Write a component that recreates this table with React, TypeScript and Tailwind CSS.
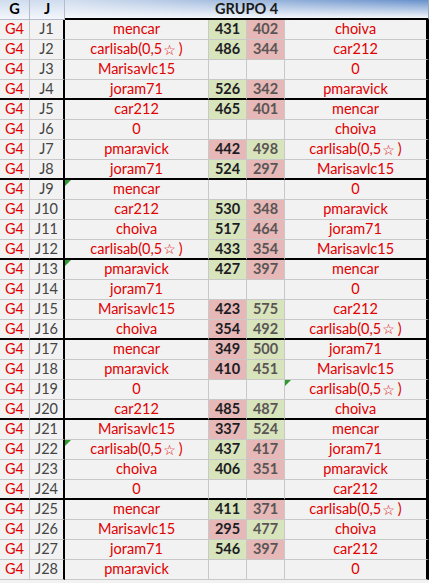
import React from 'react';

type Partido = {
  j: string;
  local: string;
  pl?: number;
  pv?: number;
  visitante: string;
  marca?: 'local' | 'visitante';
};

const partidos: Partido[] = [
  { j: 'J1', local: 'mencar', pl: 431, pv: 402, visitante: 'choiva' },
  { j: 'J2', local: 'carlisab(0,5☆)', pl: 486, pv: 344, visitante: 'car212' },
  { j: 'J3', local: 'Marisavlc15', visitante: '0' },
  { j: 'J4', local: 'joram71', pl: 526, pv: 342, visitante: 'pmaravick' },
  { j: 'J5', local: 'car212', pl: 465, pv: 401, visitante: 'mencar' },
  { j: 'J6', local: '0', visitante: 'choiva' },
  { j: 'J7', local: 'pmaravick', pl: 442, pv: 498, visitante: 'carlisab(0,5☆)' },
  { j: 'J8', local: 'joram71', pl: 524, pv: 297, visitante: 'Marisavlc15' },
  { j: 'J9', local: 'mencar', visitante: '0', marca: 'local' },
  { j: 'J10', local: 'car212', pl: 530, pv: 348, visitante: 'pmaravick' },
  { j: 'J11', local: 'choiva', pl: 517, pv: 464, visitante: 'joram71' },
  { j: 'J12', local: 'carlisab(0,5☆)', pl: 433, pv: 354, visitante: 'Marisavlc15' },
  { j: 'J13', local: 'pmaravick', pl: 427, pv: 397, visitante: 'mencar', marca: 'local' },
  { j: 'J14', local: 'joram71', visitante: '0' },
  { j: 'J15', local: 'Marisavlc15', pl: 423, pv: 575, visitante: 'car212' },
  { j: 'J16', local: 'choiva', pl: 354, pv: 492, visitante: 'carlisab(0,5☆)' },
  { j: 'J17', local: 'mencar', pl: 349, pv: 500, visitante: 'joram71' },
  { j: 'J18', local: 'pmaravick', pl: 410, pv: 451, visitante: 'Marisavlc15' },
  { j: 'J19', local: '0', visitante: 'carlisab(0,5☆)', marca: 'visitante' },
  { j: 'J20', local: 'car212', pl: 485, pv: 487, visitante: 'choiva' },
  { j: 'J21', local: 'Marisavlc15', pl: 337, pv: 524, visitante: 'mencar' },
  { j: 'J22', local: 'carlisab(0,5☆)', pl: 437, pv: 417, visitante: 'joram71', marca: 'local' },
  { j: 'J23', local: 'choiva', pl: 406, pv: 351, visitante: 'pmaravick' },
  { j: 'J24', local: '0', visitante: 'car212' },
  { j: 'J25', local: 'mencar', pl: 411, pv: 371, visitante: 'carlisab(0,5☆)' },
  { j: 'J26', local: 'Marisavlc15', pl: 295, pv: 477, visitante: 'choiva' },
  { j: 'J27', local: 'joram71', pl: 546, pv: 397, visitante: 'car212' },
  { j: 'J28', local: 'pmaravick', visitante: '0' },
];

// nombre con la estrella separada para que se vea como en la hoja
const Nombre = ({ texto }: { texto: string }) => {
  if (!texto.includes('☆')) return <>{texto}</>;
  const [antes, despues] = texto.split('☆');
  return (
    <>
      {antes}
      <span className="ml-[1px] mr-[3px] text-[14px] font-['DejaVu_Sans',sans-serif]">☆</span>
      {despues}
    </>
  );
};

// triangulito verde de comentario
const Marca = () => (
  <span className="absolute left-0 top-0 h-0 w-0 border-l-[6px] border-b-[6px] border-l-[#2e9a2e] border-b-transparent" />
);

const Fila = ({ p, i }: { p: Partido; i: number }) => {
  const finGrupo = (i + 1) % 4 === 0 && i !== partidos.length - 1;
  const borde = finGrupo ? 'border-b-2 border-b-black' : 'border-b border-b-[#c8c8c8]';
  const hay = p.pl !== undefined && p.pv !== undefined;
  const ganaLocal = hay && (p.pl as number) > (p.pv as number);
  const bgL = !hay ? 'bg-[#f2f2f2]' : ganaLocal ? 'bg-[#d8e4bc]' : 'bg-[#e6b8b7]';
  const bgV = !hay ? 'bg-[#f2f2f2]' : ganaLocal ? 'bg-[#e6b8b7]' : 'bg-[#d8e4bc]';

  return (
    <div className="flex h-[20px]">
      <div className={`flex w-[30px] items-center justify-center border-r border-r-[#c8c8c8] text-[#e00000] ${borde}`}>
        G4
      </div>
      <div className={`flex w-[35px] items-center justify-center border-r-2 border-r-black text-[#444] ${borde}`}>
        {p.j}
      </div>
      <div className={`relative flex w-[144px] items-center justify-center border-r border-r-[#c8c8c8] text-[#e00000] ${borde}`}>
        {p.marca === 'local' && <Marca />}
        <Nombre texto={p.local} />
      </div>
      <div className={`flex w-[38px] items-center justify-center border-r border-r-[#c8c8c8] font-bold text-[#1c1c24] ${bgL} ${borde}`}>
        {p.pl}
      </div>
      <div className={`flex w-[38px] items-center justify-center border-r border-r-[#c8c8c8] font-bold text-[#5a5555] ${bgV} ${borde}`}>
        {p.pv}
      </div>
      <div className={`relative flex w-[144px] items-center justify-center border-r-[3px] border-r-black text-[#e00000] ${borde}`}>
        {p.marca === 'visitante' && <Marca />}
        <Nombre texto={p.visitante} />
      </div>
    </div>
  );
};

export default function App() {
  return (
    <div className="w-[429px] h-[583px] overflow-hidden bg-[#f2f2f2] font-['Lato',sans-serif] text-[14.5px] leading-none">
      <div className="flex h-[20px]">
        <div className="flex w-[30px] items-center justify-center border-r border-b border-[#b4bccb] bg-[linear-gradient(to_bottom,#cfdcee,#f4f7fb)] font-bold text-black">
          G
        </div>
        <div className="flex w-[35px] items-center justify-center border-r border-b border-[#b4bccb] bg-[linear-gradient(to_bottom,#cfdcee,#f4f7fb)] font-bold text-black">
          J
        </div>
        <div className="flex w-[364px] items-center justify-center border-b-2 border-b-black border-r border-r-[#9aa6b8] bg-[linear-gradient(to_bottom,rgba(244,247,251,0)_0%,#f4f7fb_100%),linear-gradient(to_right,#d3dfef,#6690cb)] font-bold text-[#1a1a1a]">
          GRUPO 4
        </div>
      </div>
      {partidos.map((p, i) => (
        <Fila key={p.j} p={p} i={i} />
      ))}
    </div>
  );
}
